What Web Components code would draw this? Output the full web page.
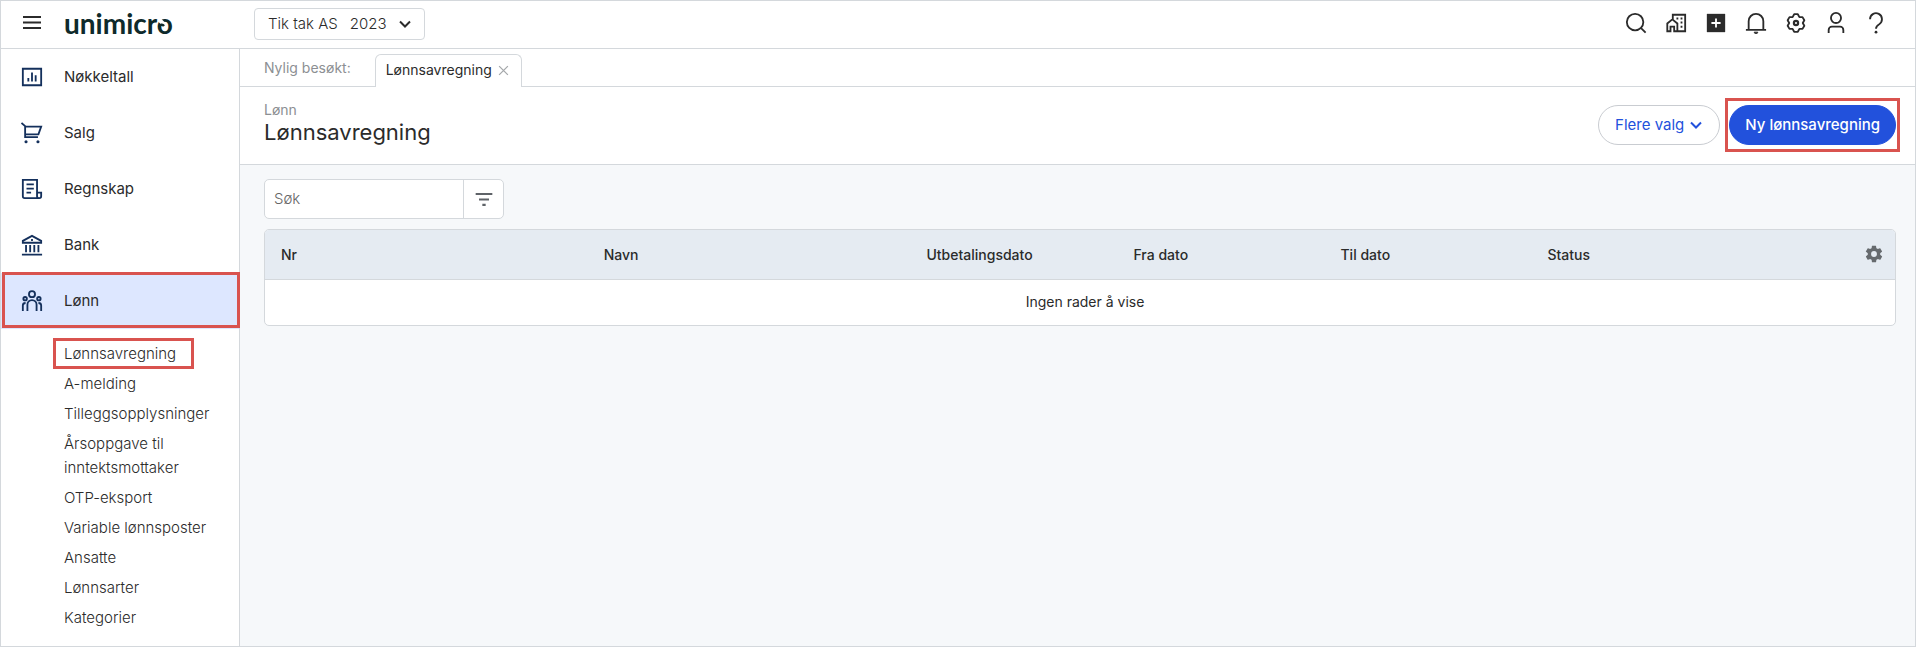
<!DOCTYPE html>
<html lang="no">
<head>
<meta charset="utf-8">
<title>Lønnsavregning</title>
<style>
    html, body {
        height: 100%;
        margin: 0;
    }
    body {
        font: 15px/24px Inter, "Liberation Sans", sans-serif;
        color: #2b2b2b;
        --line: #d4d8dc;
        --mark: #d9534f;
        --navy: #14305c;
        --blue: #2251dc;
        --gutter: 24px;
        --edge: 19px;
    }
</style>
</head>
<body>
<payroll-app></payroll-app>

<script>
const icons = {
    menu: '<path d="M3 6h18M3 11.500h18M3 17h18"/>',
    down: '<path d="M6 9l6 6 6-6" stroke-width="2.400"/>',
    close: '<path d="M5 5l14 14M19 5L5 19" stroke-width="2"/>',
    search: '<circle cx="11" cy="11" r="9"/><path d="M17.500 17.500L22.500 22.500"/>',
    company: '<path d="M8.500 8V3H22v18H14M2.500 21V12.500L8 8l5.500 4.500V21H10v-5H6v5z"/><path d="M12.500 7h2M17 7h2M17 11.500h2M17 16h2" stroke-width="2.200"/>',
    add: '<path d="M2 2h20v20H2z" fill="currentColor" stroke="none"/><path d="M12 7v10M7 12h10" stroke="#fff"/>',
    bell: '<path d="M1 19.500h22M4 19.500V10a8 8 0 0 1 16 0v9.500"/><path d="M10 22a2 1.500 0 0 0 4 0z" fill="currentColor" stroke-width="1"/>',
    gear: '<path d="M10 2.400h4l1.700 3.200 3.400 0 2 3.400-1.700 3 1.700 3-2 3.400h-3.400L14 21.600h-4l-1.700-3.200H4.900L2.900 15l1.700-3-1.700-3 2-3.400h3.400z" stroke-linejoin="round"/><circle cx="12" cy="12" r="2.300" stroke-width="2.400"/>',
    user: '<circle cx="12" cy="6.500" r="5.500"/><path d="M4 23v-3.500a3.500 3.500 0 0 1 3.500-3.500h9a3.500 3.500 0 0 1 3.500 3.500V23"/>',
    help: '<path d="M5.500 8a6.500 6.500 0 1 1 10 5.300c-2.500 1.500-3.500 2.500-3.500 5"/><circle cx="12" cy="22" r="1.500" fill="currentColor" stroke="none"/>',
    chart: '<path d="M2 3h20v18H2z"/><path d="M8 17v-4M12 17V7M16 17v-7"/>',
    cart: '<path d="M.500 1L4.500 4.500V16.500h14M4.500 5h17.500L19 13.500H4.500"/><circle cx="5.500" cy="21.500" r="1.700" fill="currentColor" stroke="none"/><circle cx="18.500" cy="21.500" r="1.700" fill="currentColor" stroke="none"/>',
    ledger: '<path d="M17.500 16V2H2v18a2 2 0 0 0 2 2h16a2 2 0 0 0 2-2v-4h-4.500v4a2 2 0 0 0 2 2M6 7h8M6 11.500h8M6 16h5"/>',
    bank: '<path d="M1 22.500h22M2 9.500h20V7.500L12 2 2 7.500zM5.500 12v8M10 12v8M14.500 12v8M19 12v8"/><path d="M11 6.500h2"/>',
    people: '<circle cx="12" cy="4.500" r="3.300"/><circle cx="4.500" cy="9.500" r="1.900"/><circle cx="19.500" cy="9.500" r="1.900"/><path d="M7 23v-7a5 5 0 0 1 10 0v7M2 23v-6c0-1.800.800-2.800 3-2.800M22 23v-6c0-1.800-.800-2.800-3-2.800"/>',
    filter: '<path d="M2 6h20M6 12.500h12M10 19h4" stroke-width="2.500"/>',
    cog: '<path d="M19.400 13c.040-.300.070-.600.070-1s-.030-.700-.070-1l2.100-1.600c.200-.150.250-.420.120-.640l-2-3.460c-.120-.220-.380-.300-.600-.220l-2.500 1a7.300 7.300 0 0 0-1.700-1l-.380-2.650A.490.490 0 0 0 14 2h-4c-.250 0-.460.180-.500.420l-.380 2.650c-.600.250-1.170.590-1.690.980l-2.490-1c-.230-.090-.490 0-.610.220l-2 3.460c-.130.220-.070.490.120.640L4.570 11c-.040.300-.070.650-.070 1s.030.670.070 1l-2.110 1.650c-.190.150-.240.420-.120.640l2 3.460c.120.220.390.300.610.220l2.490-1c.520.400 1.080.730 1.690.980l.380 2.650c.040.240.250.420.500.420h4c.250 0 .460-.180.490-.420l.380-2.650a7.300 7.300 0 0 0 1.690-.980l2.490 1c.230.080.490 0 .610-.220l2-3.460c.120-.220.070-.490-.120-.640zM12 15.500a3.500 3.500 0 1 1 0-7 3.500 3.500 0 0 1 0 7z" fill="currentColor" stroke="none"/>'
};

class UiIcon extends HTMLElement {
    constructor() {
        super();
        const size = this.getAttribute('size') || 24;
        this.attachShadow({ mode: 'open' }).innerHTML = `
            <style>
                :host { display: inline-flex; flex: none; }
                svg { display: block; fill: none; stroke: currentColor; stroke-width: 2; }
            </style>
            <svg width="${size}" height="${size}" viewBox="0 0 24 24" aria-hidden="true">${icons[this.getAttribute('name')]}</svg>
        `;
    }
}

// red frame laid over whatever is slotted in
class MarkFrame extends HTMLElement {
    constructor() {
        super();
        this.attachShadow({ mode: 'open' }).innerHTML = `
            <style>
                :host { display: block; position: relative; }
                :host::after {
                    content: "";
                    position: absolute;
                    inset: var(--frame-inset, 0);
                    border: 3px solid var(--mark);
                    pointer-events: none;
                }
            </style>
            <slot></slot>
        `;
    }
}

class TopBar extends HTMLElement {
    constructor() {
        super();
        const actions = [['search', 'Søk'], ['company', 'Selskap'], ['add', 'Ny'], ['bell', 'Varsler'],
            ['gear', 'Innstillinger'], ['user', 'Bruker'], ['help', 'Hjelp']];
        this.attachShadow({ mode: 'open' }).innerHTML = `
            <style>
                :host {
                    display: flex;
                    align-items: center;
                    height: 46px;
                    padding: 0 var(--edge) 1px 0;
                    border-bottom: 1px solid var(--line);
                    background: #fff;
                }
                button {
                    display: flex;
                    align-items: center;
                    justify-content: center;
                    padding: 0;
                    border: 0;
                    background: none;
                    font: inherit;
                    color: inherit;
                }
                .brand {
                    display: flex;
                    align-items: center;
                    gap: 20px;
                    width: 234px;
                    padding: 0 0 2px 19px;
                }
                .logo {
                    font: 700 28px/32px Lato, sans-serif;
                    color: #0e2a2b;
                }
                /* the last letter is an open ring whose end curls inwards */
                .ring { position: relative; }
                .ring svg { position: absolute; left: 0; bottom: 5px; fill: none; }
                .company {
                    gap: 8px;
                    height: 32px;
                    padding: 0 9px 0 13px;
                    border: 1px solid var(--line);
                    border-radius: 4px;
                    box-sizing: border-box;
                    font-weight: 300;
                }
                .year { margin-left: 4px; }
                .actions { display: flex; margin-left: auto; padding-bottom: 2px; }
                .actions button { width: 40px; height: 40px; }
            </style>
            <div class="brand">
                <button aria-label="Meny"><ui-icon name="menu"></ui-icon></button>
                <span class="logo">unimicr<span class="ring">o<svg width="17" height="17" viewBox="0 0 17 17" aria-hidden="true"><path d="M2 1.500L6.500 6" stroke="#fff" stroke-width="4"/><path d="M2 9c1-2.500 3.500-3 5-1" stroke="#0e2a2b" stroke-width="2.500"/></svg></span></span>
            </div>
            <button class="company"><span>Tik tak AS</span><span class="year">2023</span><ui-icon name="down" size="20"></ui-icon></button>
            <div class="actions">
                ${actions.map(([icon, label]) => `<button aria-label="${label}"><ui-icon name="${icon}" size="22"></ui-icon></button>`).join('')}
            </div>
        `;
    }
}

class NavItem extends HTMLElement {
    constructor() {
        super();
        this.attachShadow({ mode: 'open' }).innerHTML = `
            <style>
                :host { display: block; }
                :host([active]) a { background: #dde7ff; }
                a {
                    display: flex;
                    align-items: center;
                    gap: 21px;
                    height: 56px;
                    padding-left: 20px;
                    color: inherit;
                    text-decoration: none;
                }
                ui-icon { color: var(--navy); }
            </style>
            <a href="#"><ui-icon name="${this.getAttribute('icon')}" size="22"></ui-icon><slot></slot></a>
        `;
    }
}

class SubItem extends HTMLElement {
    constructor() {
        super();
        this.attachShadow({ mode: 'open' }).innerHTML = `
            <style>
                :host { display: block; padding: 3px 0; font-weight: 300; }
                a { color: inherit; text-decoration: none; }
            </style>
            <a href="#"><slot></slot></a>
        `;
    }
}

class SideMenu extends HTMLElement {
    constructor() {
        super();
        this.attachShadow({ mode: 'open' }).innerHTML = `
            <style>
                :host {
                    display: block;
                    border-right: 1px solid var(--line);
                    background: #fff;
                }
                .main { --frame-inset: -1px -1px 1px 1px; }
                .sub { padding: 10px 24px 10px 63px; }
                .sub mark-frame { width: max-content; --frame-inset: -1px -18px 0 -11px; }
            </style>
            <nav>
                <nav-item icon="chart">Nøkkeltall</nav-item>
                <nav-item icon="cart">Salg</nav-item>
                <nav-item icon="ledger">Regnskap</nav-item>
                <nav-item icon="bank">Bank</nav-item>
                <mark-frame class="main"><nav-item icon="people" active>Lønn</nav-item></mark-frame>
                <div class="sub">
                    <mark-frame><sub-item>Lønnsavregning</sub-item></mark-frame>
                    <sub-item>A-melding</sub-item>
                    <sub-item>Tilleggsopplysninger</sub-item>
                    <sub-item>Årsoppgave til inntektsmottaker</sub-item>
                    <sub-item>OTP-eksport</sub-item>
                    <sub-item>Variable lønnsposter</sub-item>
                    <sub-item>Ansatte</sub-item>
                    <sub-item>Lønnsarter</sub-item>
                    <sub-item>Kategorier</sub-item>
                </div>
            </nav>
        `;
    }
}

class RecentTabs extends HTMLElement {
    constructor() {
        super();
        this.attachShadow({ mode: 'open' }).innerHTML = `
            <style>
                :host {
                    display: flex;
                    align-items: flex-end;
                    height: 37px;
                    padding-left: var(--gutter);
                    border-bottom: 1px solid var(--line);
                    background: #fff;
                    font-size: 14px;
                }
                .label { padding: 0 24px 6px 0; color: #8c8f93; }
                .tab {
                    display: flex;
                    align-items: center;
                    gap: 4px;
                    height: 30px;
                    margin-bottom: -1px;
                    padding: 0 10px 2px;
                    border: 1px solid var(--line);
                    border-bottom: 0;
                    border-radius: 6px 6px 0 0;
                    background: #fff;
                }
                a { color: inherit; text-decoration: none; }
                button { display: flex; padding: 0; border: 0; background: none; color: #a5a8ab; }
            </style>
            <span class="label">Nylig besøkt:</span>
            <div class="tab">
                <a href="#"><slot></slot></a>
                <button aria-label="Lukk"><ui-icon name="close" size="15"></ui-icon></button>
            </div>
        `;
    }
}

class PageHead extends HTMLElement {
    constructor() {
        super();
        this.attachShadow({ mode: 'open' }).innerHTML = `
            <style>
                :host {
                    display: flex;
                    align-items: center;
                    justify-content: space-between;
                    height: 75px;
                    padding: 0 var(--edge) 2px var(--gutter);
                    border-bottom: 1px solid var(--line);
                    background: #fff;
                }
                .title { padding-bottom: 2px; }
                .crumb { font-size: 14px; line-height: 16px; color: #8c8f93; }
                h1 { margin: 0; font-size: 22px; font-weight: 400; line-height: 28px; }
                .actions { display: flex; gap: 9px; --frame-inset: -7px -4px; }
                button {
                    display: flex;
                    align-items: center;
                    gap: 2px;
                    height: 40px;
                    padding: 0 13px 0 16px;
                    border: 1px solid #c9ccd1;
                    border-radius: 20px;
                    background: #fff;
                    font: inherit;
                    color: var(--blue);
                }
                .primary {
                    padding: 0 15px;
                    border-color: var(--blue);
                    background: var(--blue);
                    font-weight: 500;
                    color: #fff;
                }
            </style>
            <div class="title">
                <div class="crumb">${this.getAttribute('section')}</div>
                <h1><slot></slot></h1>
            </div>
            <div class="actions">
                <button>Flere valg <ui-icon name="down" size="20"></ui-icon></button>
                <mark-frame><button class="primary">Ny lønnsavregning</button></mark-frame>
            </div>
        `;
    }
}

class SearchBox extends HTMLElement {
    constructor() {
        super();
        this.attachShadow({ mode: 'open' }).innerHTML = `
            <style>
                :host {
                    display: flex;
                    width: 240px;
                    height: 40px;
                    border: 1px solid var(--line);
                    border-radius: 5px;
                    box-sizing: border-box;
                    background: #fff;
                    overflow: hidden;
                }
                input {
                    flex: 1;
                    min-width: 0;
                    padding: 0 9px;
                    border: 0;
                    outline: 0;
                    background: none;
                    font: inherit;
                    font-weight: 300;
                }
                input::placeholder { color: #666; }
                button {
                    display: flex;
                    align-items: center;
                    justify-content: center;
                    width: 40px;
                    padding: 0;
                    border: 0;
                    border-left: 1px solid var(--line);
                    background: none;
                    color: #5f6368;
                }
            </style>
            <input type="text" placeholder="Søk" aria-label="Søk">
            <button aria-label="Filter"><ui-icon name="filter" size="20"></ui-icon></button>
        `;
    }
}

class PayrollTable extends HTMLElement {
    constructor() {
        super();
        this.attachShadow({ mode: 'open' }).innerHTML = `
            <style>
                :host {
                    display: block;
                    border: 1px solid var(--line);
                    border-radius: 5px;
                    background: #fff;
                    font-size: 14px;
                    overflow: hidden;
                }
                table { width: 100%; table-layout: fixed; border-collapse: collapse; }
                th {
                    height: 49px;
                    padding: 2px 16px 0;
                    border-bottom: 1px solid var(--line);
                    box-sizing: border-box;
                    background: #e5ebf2;
                    font-weight: 500;
                    text-align: left;
                }
                td { height: 45px; padding: 0 0 0 10px; text-align: center; }
                .wide { width: 19.8%; }
                .date { width: 12.7%; }
                .tools { width: 42px; padding: 0; }
                button { display: flex; margin: 0 auto; padding: 0; border: 0; background: none; color: #666a6e; }
            </style>
            <table>
                <thead>
                    <tr>
                        <th class="wide">Nr</th>
                        <th class="wide">Navn</th>
                        <th class="date">Utbetalingsdato</th>
                        <th class="date">Fra dato</th>
                        <th class="date">Til dato</th>
                        <th>Status</th>
                        <th class="tools"><button aria-label="Kolonner"><ui-icon name="cog" size="20"></ui-icon></button></th>
                    </tr>
                </thead>
                <tbody>
                    <tr><td colspan="7">Ingen rader å vise</td></tr>
                </tbody>
            </table>
        `;
    }
}

class PayrollApp extends HTMLElement {
    constructor() {
        super();
        this.attachShadow({ mode: 'open' }).innerHTML = `
            <style>
                :host {
                    display: grid;
                    grid-template: auto 1fr / 239px 1fr;
                    min-height: 100%;
                    border: 1px solid var(--line);
                    box-sizing: border-box;
                    background: #f6f8fa;
                }
                top-bar { grid-column: 1 / -1; }
                .content {
                    display: flex;
                    flex-direction: column;
                    gap: 10px;
                    padding: 14px var(--edge) 14px var(--gutter);
                }
            </style>
            <top-bar></top-bar>
            <side-menu></side-menu>
            <main>
                <recent-tabs>Lønnsavregning</recent-tabs>
                <page-head section="Lønn">Lønnsavregning</page-head>
                <div class="content">
                    <search-box></search-box>
                    <payroll-table></payroll-table>
                </div>
            </main>
        `;
    }
}

customElements.define('ui-icon', UiIcon);
customElements.define('mark-frame', MarkFrame);
customElements.define('top-bar', TopBar);
customElements.define('nav-item', NavItem);
customElements.define('sub-item', SubItem);
customElements.define('side-menu', SideMenu);
customElements.define('recent-tabs', RecentTabs);
customElements.define('page-head', PageHead);
customElements.define('search-box', SearchBox);
customElements.define('payroll-table', PayrollTable);
customElements.define('payroll-app', PayrollApp);
</script>
</body>
</html>
